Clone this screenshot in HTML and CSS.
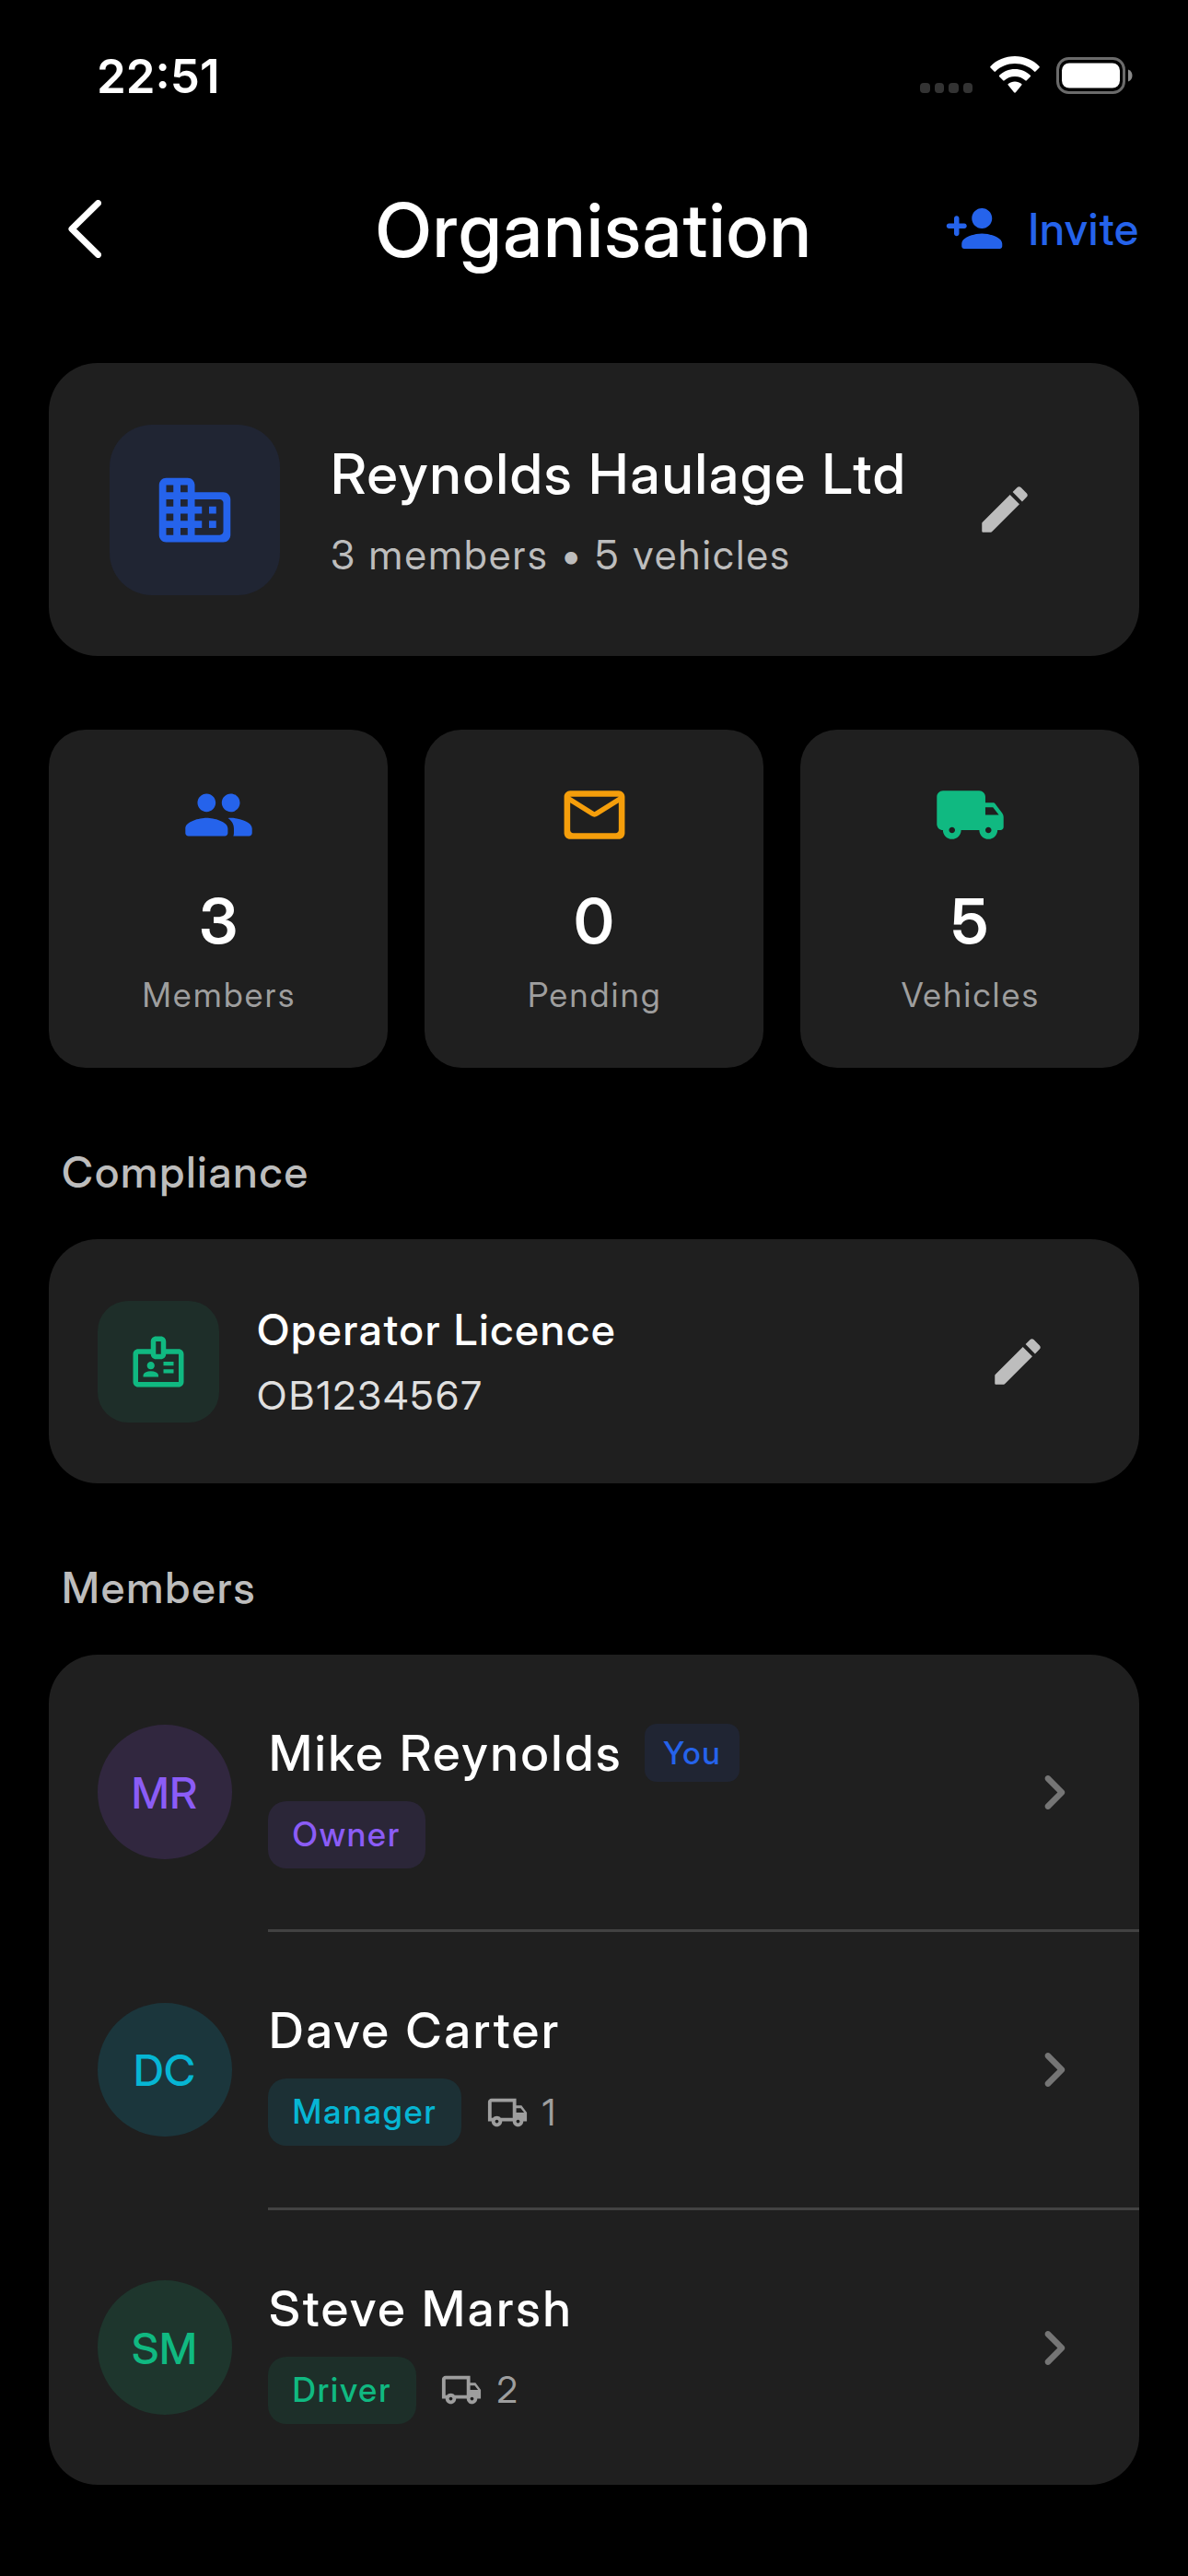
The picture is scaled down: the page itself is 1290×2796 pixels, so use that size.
FILE: index.html
```html
<!DOCTYPE html>
<html lang="en">
<head>
<meta charset="UTF-8" />
<meta name="viewport" content="width=device-width, initial-scale=1" />
<title>Organisation</title>
<link rel="stylesheet" href="styles.css">
</head>
<body>
  <!-- shared icons -->
  <svg width="0" height="0" class="sprite">
    <symbol id="edit" viewBox="0 0 24 24"><path d="M3 17.46v3.04c0 .28.22.5.5.5h3.04c.13 0 .26-.05.35-.15L17.81 9.94l-3.75-3.75L3.15 17.1c-.1.1-.15.22-.15.36zM20.71 7.04c.39-.39.39-1.02 0-1.41l-2.34-2.34c-.39-.39-1.02-.39-1.41 0l-1.83 1.83 3.75 3.75 1.83-1.83z"/></symbol>
    <symbol id="chevron" viewBox="0 0 24 24"><path d="M9.29 6.71c-.39.39-.39 1.02 0 1.41L13.17 12l-3.88 3.88c-.39.39-.39 1.02 0 1.41.39.39 1.02.39 1.41 0l4.59-4.59c.39-.39.39-1.02 0-1.41L10.7 6.7c-.38-.38-1.02-.38-1.41.01z"/></symbol>
    <symbol id="truck-outline" viewBox="0 0 24 24"><path d="M20 8h-3V4H3c-1.1 0-2 .9-2 2v11h2c0 1.66 1.34 3 3 3s3-1.34 3-3h6c0 1.66 1.34 3 3 3s3-1.34 3-3h2v-5l-3-4zm-.5 1.5l1.96 2.5H17V9.5h2.5zM6 18c-.55 0-1-.45-1-1s.45-1 1-1 1 .45 1 1-.45 1-1 1zm2.22-3c-.55-.61-1.33-1-2.22-1s-1.67.39-2.22 1H3V6h12v9H8.22zM18 18c-.55 0-1-.45-1-1s.45-1 1-1 1 .45 1 1-.45 1-1 1z"/></symbol>
  </svg>

  <div class="status-bar">
    <span class="time">22:51</span>
    <div class="status-icons">
      <div class="signal"><i></i><i></i><i></i><i></i></div>
      <svg class="wifi" viewBox="0 0 54 40">
        <path d="M27 0C16.5 0 7 4 .5 11c-.5.5-.5 1 0 1.5l4 4c.5.5 1 .5 1.5 0C11.5 11 19 8 27 8s15.5 3 21 8.5c.5.5 1 .5 1.5 0l4-4c.5-.5.5-1 0-1.5C47 4 37.5 0 27 0z"/>
        <path d="M27 14c-6.5 0-12.5 2.5-16.8 6.8-.5.5-.5 1 0 1.5l4 4c.5.5 1 .5 1.5 0C18.7 23.5 22.7 22 27 22s8.3 1.5 11.3 4.3c.5.5 1 .5 1.5 0l4-4c.5-.5.5-1 0-1.5C39.5 16.5 33.5 14 27 14z"/>
        <path d="M27 27.5c-2.7 0-5.2 1-7.2 2.6-.5.4-.5 1 0 1.5l6.3 7.6c.5.6 1.3.6 1.8 0l6.3-7.6c.5-.5.5-1.1 0-1.5-2-1.6-4.5-2.6-7.2-2.6z"/>
      </svg>
      <svg class="battery" viewBox="0 0 83 40">
        <rect x="1.5" y="1.5" width="72" height="37" rx="12" fill="none" stroke="#6b6b6b" stroke-width="3"/>
        <rect x="6" y="6.5" width="63" height="27" rx="8" fill="#fff"/>
        <path d="M78 13.5c3 1.2 4.5 3.5 4.5 6.5s-1.5 5.3-4.5 6.5z" fill="#8a8a8a"/>
      </svg>
    </div>
  </div>

  <header class="app-bar">
    <svg class="back" viewBox="0 0 36 63"><path d="M32.5 3.5L4 31.5l28.5 28" /></svg>
    <h1>Organisation</h1>
    <div class="invite">
      <svg viewBox="0 0 24 24"><path d="M15 12c2.21 0 4-1.79 4-4s-1.79-4-4-4-4 1.79-4 4 1.79 4 4 4zm-9-2V8c0-.55-.45-1-1-1s-1 .45-1 1v2H2c-.55 0-1 .45-1 1s.45 1 1 1h2v2c0 .55.45 1 1 1s1-.45 1-1v-2h2c.55 0 1-.45 1-1s-.45-1-1-1H6zm9 4c-2.67 0-8 1.34-8 4v1c0 .55.45 1 1 1h14c.55 0 1-.45 1-1v-1c0-2.66-5.33-4-8-4z"/></svg>
      <span>Invite</span>
    </div>
  </header>

  <main>
    <section class="card org">
      <div class="org-icon">
        <svg viewBox="0 0 24 24"><path d="M12 7V5c0-1.1-.9-2-2-2H4c-1.1 0-2 .9-2 2v14c0 1.1.9 2 2 2h16c1.1 0 2-.9 2-2V9c0-1.1-.9-2-2-2h-8zM6 19H4v-2h2v2zm0-4H4v-2h2v2zm0-4H4V9h2v2zm0-4H4V5h2v2zm4 12H8v-2h2v2zm0-4H8v-2h2v2zm0-4H8V9h2v2zm0-4H8V5h2v2zm9 12h-7v-2h2v-2h-2v-2h2v-2h-2V9h7c.55 0 1 .45 1 1v8c0 .55-.45 1-1 1zm-1-8h-2v2h2v-2zm0 4h-2v2h2v-2z"/></svg>
      </div>
      <div class="org-text">
        <h2>Reynolds Haulage Ltd</h2>
        <p>3 members • 5 vehicles</p>
      </div>
      <svg class="edit"><use href="#edit"/></svg>
    </section>

    <section class="stats">
      <div class="stat">
        <svg class="blue" viewBox="0 0 24 24"><path d="M16 11c1.66 0 2.99-1.34 2.99-3S17.66 5 16 5s-3 1.34-3 3 1.34 3 3 3zm-8 0c1.66 0 2.99-1.34 2.99-3S9.66 5 8 5 5 6.34 5 8s1.34 3 3 3zm0 2c-2.33 0-7 1.17-7 3.5V18c0 .55.45 1 1 1h12c.55 0 1-.45 1-1v-1.5c0-2.33-4.67-3.5-7-3.5zm8 0c-.29 0-.62.02-.97.05.02.01.03.03.04.04 1.14.83 1.93 1.94 1.93 3.41V18c0 .35-.07.69-.18 1H22c.55 0 1-.45 1-1v-1.5c0-2.33-4.67-3.5-7-3.5z"/></svg>
        <strong>3</strong>
        <span>Members</span>
      </div>
      <div class="stat">
        <svg class="amber" viewBox="0 0 24 24"><path d="M20 4H4c-1.1 0-2 .9-2 2v12c0 1.1.9 2 2 2h16c1.1 0 2-.9 2-2V6c0-1.1-.9-2-2-2zm-1 14H5c-.55 0-1-.45-1-1V8l6.94 4.34c.65.41 1.47.41 2.12 0L20 8v9c0 .55-.45 1-1 1zm-7-7L4 6h16l-8 5z"/></svg>
        <strong>0</strong>
        <span>Pending</span>
      </div>
      <div class="stat">
        <svg class="green" viewBox="0 0 24 24"><path d="M19.5 8H17V6c0-1.1-.9-2-2-2H3c-1.1 0-2 .9-2 2v9c0 1.1.9 2 2 2 0 1.66 1.34 3 3 3s3-1.34 3-3h6c0 1.66 1.34 3 3 3s3-1.34 3-3h1c.55 0 1-.45 1-1v-3.33c0-.43-.14-.85-.4-1.2L20.3 8.4c-.19-.25-.49-.4-.8-.4zM6 18c-.55 0-1-.45-1-1s.45-1 1-1 1 .45 1 1-.45 1-1 1zm13.5-8.5l1.96 2.5H17V9.5h2.5zM18 18c-.55 0-1-.45-1-1s.45-1 1-1 1 .45 1 1-.45 1-1 1z"/></svg>
        <strong>5</strong>
        <span>Vehicles</span>
      </div>
    </section>

    <h3>Compliance</h3>
    <section class="card licence">
      <div class="licence-icon">
        <svg viewBox="0 0 24 24"><path d="M20 7h-5V4c0-1.1-.9-2-2-2h-2c-1.1 0-2 .9-2 2v3H4c-1.1 0-2 .9-2 2v11c0 1.1.9 2 2 2h16c1.1 0 2-.9 2-2V9c0-1.1-.9-2-2-2zm-9-3h2v5h-2V4zm9 16H4V9h5c0 1.1.9 2 2 2h2c1.1 0 2-.9 2-2h5v11zM9 15c.83 0 1.5-.67 1.5-1.5S9.83 12 9 12s-1.5.67-1.5 1.5S8.17 15 9 15zm2.08 1.18C10.44 15.9 9.74 15.75 9 15.75s-1.44.15-2.08.43c-.56.23-.92.78-.92 1.39V18h6v-.43c0-.61-.36-1.16-.92-1.39zM14 15h4v1.5h-4zM14 12h4v1.5h-4z"/></svg>
      </div>
      <div class="licence-text">
        <h4>Operator Licence</h4>
        <p>OB1234567</p>
      </div>
      <svg class="edit"><use href="#edit"/></svg>
    </section>

    <h3>Members</h3>
    <section class="card members">
      <div class="member owner">
        <div class="avatar">MR</div>
        <div class="info">
          <div class="name">Mike Reynolds <span class="you">You</span></div>
          <div class="meta"><span class="role">Owner</span></div>
        </div>
        <svg class="chevron"><use href="#chevron"/></svg>
      </div>
      <div class="member manager">
        <div class="avatar">DC</div>
        <div class="info">
          <div class="name">Dave Carter</div>
          <div class="meta"><span class="role">Manager</span><svg><use href="#truck-outline"/></svg><span class="count">1</span></div>
        </div>
        <svg class="chevron"><use href="#chevron"/></svg>
      </div>
      <div class="member driver">
        <div class="avatar">SM</div>
        <div class="info">
          <div class="name">Steve Marsh</div>
          <div class="meta"><span class="role">Driver</span><svg><use href="#truck-outline"/></svg><span class="count">2</span></div>
        </div>
        <svg class="chevron"><use href="#chevron"/></svg>
      </div>
    </section>
  </main>
</body>
</html>
```

FILE: styles.css
```css
* {
  box-sizing: border-box;
  margin: 0;
  padding: 0;
}
body {
  background-color: #000;
  color: #fff;
  font-family: "Inter Display", Inter, "Liberation Sans", sans-serif;
  height: 2796px;
  overflow: hidden;
}
svg {
  display: block;
  fill: currentColor;
  flex-shrink: 0;
}
.sprite {
  position: absolute;
}
h1, h2, h3, h4, p {
  font-weight: 500;
}

/* status bar */
.status-bar {
  height: 164px;
  padding: 0 60px 0 105px;
  display: flex;
  justify-content: space-between;
}
.time {
  font-family: Inter, "Liberation Sans", sans-serif;
  font-size: 51px;
  font-weight: 600;
  line-height: 60px;
  padding-top: 53px;
}
.status-icons {
  display: flex;
  padding-top: 61px;
}
.signal {
  display: flex;
  gap: 5px;
  padding-top: 29px;
  margin-right: 19px;
}
.signal i {
  width: 10.5px;
  height: 11px;
  border-radius: 4px;
  background-color: #333;
}
.wifi {
  width: 54px;
  height: 40px;
  margin-right: 18px;
}
.battery {
  width: 83px;
  height: 40px;
  margin-top: 1px;
}

/* app bar */
.app-bar {
  height: 230px;
  padding: 0 53px 62px;
  display: grid;
  grid-template-columns: 1fr auto 1fr;
  align-items: center;
}
.back {
  width: 36px;
  height: 63px;
  margin-left: 21px;
  fill: none;
  stroke: #fff;
  stroke-width: 7;
  stroke-linecap: round;
  stroke-linejoin: round;
}
h1 {
  font-size: 81px;
  line-height: 96px;
  letter-spacing: 1.4px;
  padding-top: 3px;
}
.invite {
  display: flex;
  align-items: center;
  justify-content: flex-end;
  gap: 26px;
  color: #2563eb;
  font-size: 48px;
  font-weight: 500;
  letter-spacing: 0.9px;
}
.invite svg {
  width: 66px;
  height: 66px;
}

main {
  padding: 0 53px;
}
.card {
  background-color: #1f1f1f;
  border-radius: 53px;
}
.edit {
  width: 66px;
  height: 66px;
  color: #bdbdbd;
}

/* organisation */
.org {
  height: 318px;
  padding: 0 113px 0 66px;
  display: flex;
  align-items: center;
}
.org-icon {
  width: 185px;
  height: 185px;
  border-radius: 46px;
  background-color: #202533;
  color: #2563eb;
  display: grid;
  place-items: center;
}
.org-icon svg {
  width: 93px;
  height: 93px;
}
.org-text {
  flex: 1;
  padding-left: 55px;
}
.org-text h2 {
  font-size: 61px;
  line-height: 82px;
  letter-spacing: 1.9px;
}
.org-text p {
  font-size: 43.5px;
  font-weight: 400;
  line-height: 62px;
  margin-top: 16px;
  letter-spacing: 2.35px;
  color: #bdbdbd;
}

/* counters */
.stats {
  display: grid;
  grid-template-columns: repeat(3, 1fr);
  gap: 40px;
  margin-top: 80px;
}
.stat {
  height: 367px;
  padding-top: 53px;
  border-radius: 40px;
  background-color: #1f1f1f;
  display: flex;
  flex-direction: column;
  align-items: center;
}
.stat svg {
  width: 79px;
  height: 79px;
}
.stat strong {
  font-size: 68px;
  font-weight: 600;
  line-height: 80px;
  margin-top: 35px;
}
.stat span {
  font-size: 36.4px;
  font-weight: 400;
  line-height: 52px;
  letter-spacing: 2.4px;
  margin-top: 15px;
  padding-left: 2px;
  color: #9e9e9e;
}
.blue { color: #2563eb; }
.amber { color: #f59e0b; }
.green { color: #10b981; }

h3 {
  font-size: 47px;
  line-height: 66px;
  letter-spacing: 1.9px;
  padding-left: 14px;
  margin: 80px 0 40px;
  color: #bdbdbd;
}

/* compliance */
.licence {
  height: 265px;
  padding: 0 99px 0 53px;
  display: flex;
  align-items: center;
}
.licence-icon {
  width: 132px;
  height: 132px;
  border-radius: 33px;
  background-color: #1e2e29;
  color: #10b981;
  display: grid;
  place-items: center;
}
.licence-icon svg {
  width: 66px;
  height: 66px;
}
.licence-text {
  flex: 1;
  padding-left: 41px;
}
.licence-text h4 {
  font-size: 47px;
  line-height: 66px;
  letter-spacing: 1.9px;
}
.licence-text p {
  font-size: 43px;
  font-weight: 400;
  line-height: 62px;
  margin-top: 7px;
  letter-spacing: 2.5px;
  color: #e0e0e0;
}

/* members */
.member {
  height: 298px;
  padding: 0 53px;
  display: flex;
  align-items: center;
}
.member + .member {
  height: 301.5px;
  padding-top: 3.5px;
  background: linear-gradient(#424242, #424242) 238px 0 / 946px 3px no-repeat;
}
.avatar {
  width: 145.5px;
  height: 145.5px;
  border-radius: 50%;
  display: grid;
  place-items: center;
  font-size: 47px;
  font-weight: 500;
  letter-spacing: 0.5px;
}
.info {
  flex: 1;
  padding-left: 39.5px;
}
.name {
  display: flex;
  align-items: center;
  padding-left: 1px;
  font-size: 54px;
  font-weight: 500;
  line-height: 79px;
  letter-spacing: 2.8px;
}
.you {
  margin-left: 24px;
  padding: 0 20px;
  border-radius: 13px;
  background-color: #202533;
  color: #2563eb;
  font-size: 34.5px;
  line-height: 63px;
  letter-spacing: 1.8px;
}
.meta {
  display: flex;
  align-items: center;
  margin-top: 13px;
  font-size: 39.7px;
  font-weight: 400;
  color: #9e9e9e;
}
.role {
  padding: 0 26.5px;
  border-radius: 20px;
  font-size: 36.4px;
  font-weight: 500;
  line-height: 73px;
  letter-spacing: 1.95px;
}
.meta svg {
  width: 46px;
  height: 46px;
  margin: 0 15px 0 26.5px;
}
.owner .avatar { background-color: #31273f; color: #8b5cf6; }
.owner .role { background-color: #2b2638; color: #8b5cf6; }
.manager .avatar { background-color: #1b363c; color: #06b6d4; }
.manager .role { background-color: #1c3035; color: #06b6d4; }
.driver .avatar { background-color: #1e362d; color: #10b981; }
.driver .role { background-color: #1d2f29; color: #10b981; }
.chevron {
  width: 79px;
  height: 79px;
  color: #757575;
}
```
